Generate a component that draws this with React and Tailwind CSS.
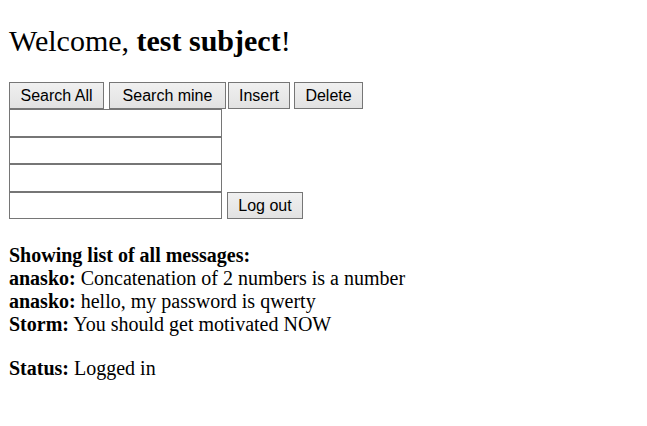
export default function App() {
  const btn =
    "h-[27px] border border-[#767676] bg-[linear-gradient(#f0f0f0,#e2e2e2)] text-[16px] leading-none text-black font-['Liberation_Sans',Arial,sans-serif] flex items-center justify-center";
  const input = "w-[213px] h-[27.5px] border border-[#767676] bg-white";
  return (
    <div className="min-h-[426px] bg-white pl-[9px] pt-[22px] text-black font-['Liberation_Serif','Times_New_Roman',serif]">
      <h1 className="text-[30px] leading-[37px] font-normal">
        Welcome, <b className="font-bold">test subject</b>!
      </h1>
      <div className="mt-[23px] flex items-start">
        <button className={`${btn} w-[95px]`}>Search All</button>
        <button className={`${btn} w-[117px] ml-[5px]`}>Search mine</button>
        <button className={`${btn} w-[62px] ml-[2px]`}>Insert</button>
        <button className={`${btn} w-[69px] ml-[4px]`}>Delete</button>
      </div>
      <div className="flex items-end">
        <div className="flex flex-col">
          <input className={input} />
          <input className={input} />
          <input className={input} />
          <input className={input} />
        </div>
        <button className={`${btn} w-[76px] ml-[5px]`}>Log out</button>
      </div>
      <div className="mt-[25px] text-[20px] leading-[23px]">
        <div>
          <b>Showing list of all messages:</b>
        </div>
        <div>
          <b>anasko:</b> Concatenation of 2 numbers is a number
        </div>
        <div>
          <b>anasko:</b> hello, my password is qwerty
        </div>
        <div>
          <b>Storm:</b> You should get motivated NOW
        </div>
        <p className="mt-[21px]">
          <b>Status:</b> Logged in
        </p>
      </div>
    </div>
  );
}
